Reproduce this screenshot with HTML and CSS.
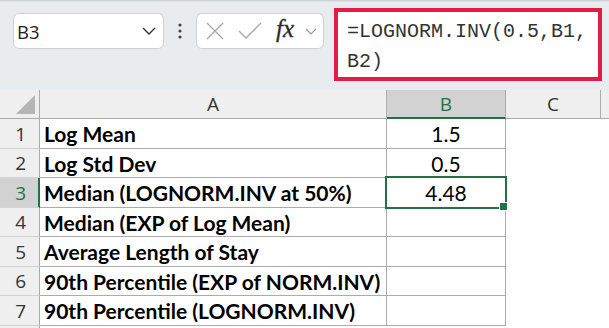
FILE: index.html
```html
<!DOCTYPE html>
<html lang="en">
<head>
    <meta charset="UTF-8">
    <title>LOGNORM.INV</title>
    <link rel="stylesheet" href="styles.css">
</head>
<body>
<div class="bar">
    <div class="namebox">
        <span class="name">B3</span>
        <svg class="chev" width="14" height="8" viewBox="0 0 14 8"><path d="M1 1 L7 7 L13 1" fill="none" stroke="#333" stroke-width="1.4"/></svg>
    </div>
    <svg class="dots" width="6" height="18" viewBox="0 0 6 18"><circle cx="3" cy="3" r="1.6" fill="#444"/><circle cx="3" cy="9" r="1.6" fill="#444"/><circle cx="3" cy="15" r="1.6" fill="#444"/></svg>
    <div class="fxbox">
        <svg width="18" height="18" viewBox="0 0 18 18"><path d="M1 1 L17 17 M17 1 L1 17" stroke="#a8a8a8" stroke-width="1.3" fill="none"/></svg>
        <svg width="24" height="18" viewBox="0 0 24 18"><path d="M1 9 L8 16 L23 1" stroke="#a8a8a8" stroke-width="1.3" fill="none"/></svg>
        <span class="fx">fx</span>
        <svg width="12" height="7" viewBox="0 0 12 7"><path d="M1 1 L6 6 L11 1" fill="none" stroke="#999" stroke-width="1.2"/></svg>
    </div>
    <div class="formula">=LOGNORM.INV(0.5,B1,<br>B2)</div>
</div>

<div class="sheet">
    <div class="hd corner"><svg width="19" height="19" viewBox="0 0 19 19"><polygon points="19,0 19,19 0,19" fill="#b5b5b5"/></svg></div>
    <div class="hd col">A</div>
    <div class="hd col sel">B</div>
    <div class="hd col">C</div>
    <div class="hd col last"></div>

    <div class="hd row">1</div><div class="c lbl">Log Mean</div><div class="c val">1.5</div><div class="c e"></div><div class="c e last"></div>
    <div class="hd row">2</div><div class="c lbl">Log Std Dev</div><div class="c val">0.5</div><div class="c e"></div><div class="c e last"></div>
    <div class="hd row rsel">3</div><div class="c lbl">Median (LOGNORM.INV at 50%)</div><div class="c val active">4.48<span class="box"></span><span class="handle"></span></div><div class="c e"></div><div class="c e last"></div>
    <div class="hd row">4</div><div class="c lbl">Median (EXP of Log Mean)</div><div class="c val"></div><div class="c e"></div><div class="c e last"></div>
    <div class="hd row">5</div><div class="c lbl">Average Length of Stay</div><div class="c val"></div><div class="c e"></div><div class="c e last"></div>
    <div class="hd row">6</div><div class="c lbl">90th Percentile (EXP of NORM.INV)</div><div class="c val"></div><div class="c e"></div><div class="c e last"></div>
    <div class="hd row">7</div><div class="c lbl">90th Percentile (LOGNORM.INV)</div><div class="c val"></div><div class="c e"></div><div class="c e last"></div>
    <div class="hd row"></div><div class="c e"></div><div class="c e"></div><div class="c e"></div><div class="c e last"></div>
</div>
</body>
</html>
```

FILE: styles.css
```css
body{
    margin: 0;
    width: 609px;
    height: 328px;
    overflow: hidden;
    background: #fff;
    font-family: "Open Sans", "Noto Sans", sans-serif;
}
.bar{
    height: 90px;
    box-sizing: border-box;
    background-color: #e9ecef;
    box-shadow: inset 0 3px 2px -2px #c4c7cb;
    display: flex;
    align-items: flex-start;
    padding-left: 13px;
}
.namebox{
    margin-top: 13px;
    width: 151px;
    height: 36px;
    box-sizing: border-box;
    background: #fff;
    border: 1px solid #cfd1d4;
    border-radius: 6px;
    display: flex;
    align-items: center;
    justify-content: space-between;
    padding: 0 7px 0 3px;
}
.name{
    font-size: 18.5px;
    color: #222;
}
.dots{
    margin: 22px 0 0 13px;
}
.fxbox{
    margin: 13px 0 0 13px;
    width: 128px;
    height: 36px;
    box-sizing: border-box;
    background: #fff;
    border: 1px solid #cfd1d4;
    border-radius: 6px;
    display: flex;
    align-items: center;
    padding-left: 9px;
}
.fxbox svg:nth-child(2){
    margin-left: 14px;
}
.fx{
    font-family: "Liberation Serif", serif;
    font-style: italic;
    font-size: 25px;
    color: #2b2b2b;
    margin: -5px 0 0 14px;
    -webkit-text-stroke: 0.3px #2b2b2b;
}
.fxbox svg:last-child{
    margin-left: 11px;
}
.formula{
    margin: 8px 0 0 10px;
    width: 268px;
    height: 73px;
    box-sizing: border-box;
    background: #fff;
    border: 4px solid #e31b47;
    padding: 5px 0 0 9px;
    font-family: "Liberation Mono", monospace;
    font-size: 20px;
    line-height: 30px;
    color: #333;
}

.sheet{
    display: grid;
    grid-template-columns: 40px 347px 119px 95px 1fr;
    grid-template-rows: 29px 30px 29px 30px 29px 30px 29px 30px 10px;
}
.hd{
    background: #efefef;
    border-right: 1px solid #ababab;
    border-bottom: 1px solid #ababab;
    box-sizing: border-box;
    color: #333;
    font-size: 19px;
    display: flex;
    align-items: center;
}
.corner{
    justify-content: flex-end;
    align-items: flex-end;
    padding: 0 4px 4px 0;
}
.col{
    justify-content: center;
}
.col.sel{
    background: #d2d2d2;
    color: #217346;
    border-bottom: 2px solid #217346;
}
.row{
    justify-content: flex-end;
    padding-right: 13px;
    border-bottom-color: #d4d4d4;
}
.rsel{
    background: #d2d2d2;
    color: #217346;
    border-right: 2px solid #217346;
    padding-right: 12px;
}
.last{
    border-right: none;
}
.c{
    box-sizing: border-box;
    border-right: 1px solid #ababab;
    border-bottom: 1px solid #ababab;
    font-family: Lato, "Liberation Sans", sans-serif;
    font-size: 21px;
    color: #000;
    display: flex;
    align-items: center;
}
.c.e{
    border-color: transparent;
}
.lbl{
    font-weight: bold;
    padding-left: 4px;
}
.val{
    justify-content: center;
}
.active{
    position: relative;
}
.box{
    position: absolute;
    left: -2px;
    top: -2px;
    right: -2px;
    bottom: -2px;
    border: 2px solid #217346;
}
.handle{
    position: absolute;
    right: -3px;
    bottom: -4px;
    width: 7px;
    height: 7px;
    background: #217346;
    border: 1px solid #fff;
}
```
